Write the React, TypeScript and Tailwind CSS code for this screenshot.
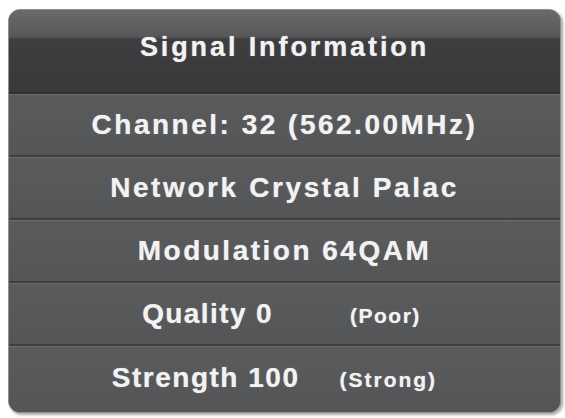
import React from "react";

const font = { fontFamily: '"Liberation Sans", Arial, Helvetica, sans-serif' };

function Row({ children, last }: { children: React.ReactNode; last?: boolean }) {
  return (
    <div
      className={`flex items-center justify-center bg-[linear-gradient(#5a5b5d,#545557)] ${
        last ? "flex-1 pb-[2px]" : "h-[63px] border-b-2 border-b-[#3e3f40]"
      } shadow-[inset_0_1px_0_rgba(255,255,255,0.10)]`}
    >
      {children}
    </div>
  );
}

const txt = "font-bold text-[#f2f2f2] [text-shadow:0_0_1px_rgba(255,255,255,0.6)]";

export default function App() {
  return (
    <div className="w-[565px] h-[418px] bg-white pt-[9px] pl-[8px]" style={font}>
      <div className="w-[553px] h-[404px] rounded-[12px] overflow-hidden border border-[#8f9092] bg-[#55565a] shadow-[2px_2px_3px_rgba(0,0,0,0.35)] flex flex-col">
        <div className="h-[84px] flex items-center justify-center bg-[linear-gradient(180deg,#6a6a6c_0%,#58585a_32%,#3e3e40_36%,#3a3a3c_85%,#3b3b3d_100%)] border-b-2 border-b-[#2f3031]">
          <span className={`text-[27px] tracking-[2.9px] pb-[8px] ${txt}`}>
            Signal Information
          </span>
        </div>
        <Row>
          <span className={`text-[28px] tracking-[2.5px] ${txt}`}>
            Channel: 32 (562.00MHz)
          </span>
        </Row>
        <Row>
          <span className={`text-[28px] tracking-[2.6px] ${txt}`}>
            Network Crystal Palac
          </span>
        </Row>
        <Row>
          <span className={`text-[28px] tracking-[2.5px] ${txt}`}>
            Modulation 64QAM
          </span>
        </Row>
        <Row>
          <div className="flex items-baseline pr-[6px]">
            <span className={`text-[28px] tracking-[1.4px] ${txt}`}>Quality 0</span>
            <span className={`ml-[77px] text-[21px] tracking-[1.5px] ${txt}`}>(Poor)</span>
          </div>
        </Row>
        <Row last>
          <div className="flex items-baseline pr-[20px]">
            <span className={`text-[28px] tracking-[1.5px] ${txt}`}>Strength 100</span>
            <span className={`ml-[40px] text-[21px] tracking-[2px] ${txt}`}>(Strong)</span>
          </div>
        </Row>
      </div>
    </div>
  );
}
